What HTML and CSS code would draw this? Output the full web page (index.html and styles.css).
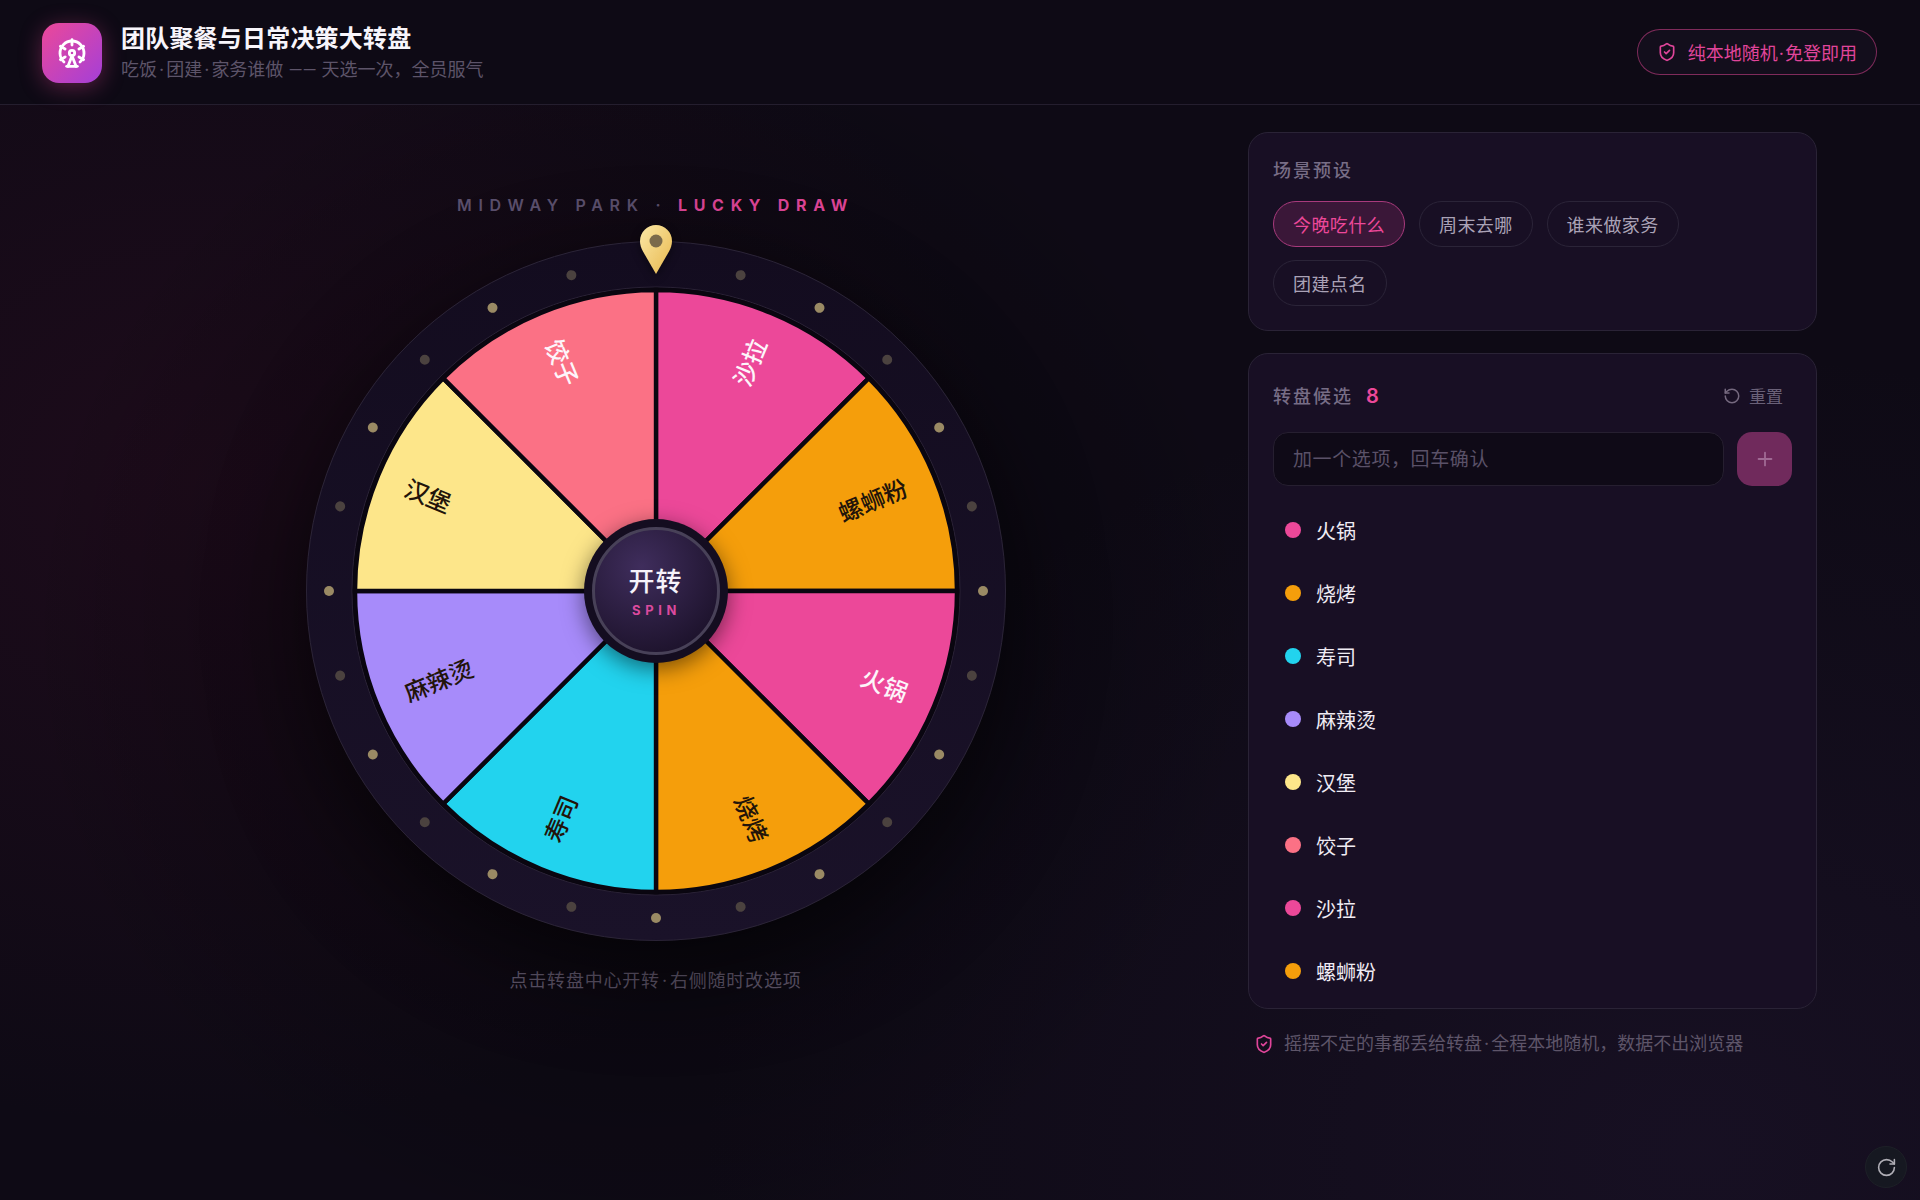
FILE: index.html
```html
<!DOCTYPE html>
<html lang="zh-CN">
<head>
<meta charset="utf-8">
<title>团队聚餐与日常决策大转盘</title>
<link rel="stylesheet" href="styles.css">
</head>
<body>
<header class="topbar">
  <div class="brand">
    <div class="logo">
      <svg class="logo-icon" viewBox="0 0 24 24"><circle cx="12" cy="12" r="2"/><path d="M12 2v4"/><path d="m6.8 15-3.5 2"/><path d="m20.7 7-3.5 2"/><path d="M6.8 9 3.3 7"/><path d="m20.7 17-3.5-2"/><path d="m9 22 3-8 3 8"/><path d="M8 22h8"/><path d="M18 18.7a9 9 0 1 0-12 0"/></svg>
    </div>
    <div class="brand-text">
      <h1 class="title">团队聚餐与日常决策大转盘</h1>
      <p class="subtitle">吃饭<span class="sep">·</span>团建<span class="sep">·</span>家务谁做 <span class="dash">——</span> 天选一次，全员服气</p>
    </div>
  </div>
  <div class="badge">
    <svg class="badge-icon" viewBox="0 0 24 24"><path d="M20 13c0 5-3.5 7.5-7.66 8.95a1 1 0 0 1-.67-.01C7.5 20.5 4 18 4 13V6a1 1 0 0 1 1-1c2 0 4.5-1.2 6.24-2.72a1.17 1.17 0 0 1 1.52 0C14.51 3.81 17 5 19 5a1 1 0 0 1 1 1z"/><path d="m9 12 2 2 4-4"/></svg>
    <span>纯本地随机<span class="sep">·</span>免登即用</span>
  </div>
</header>

<main class="layout">
  <section class="stage-col">
    <div class="caption"><span class="caption-dim">MIDWAY PARK ·</span> <span class="caption-hot">LUCKY DRAW</span></div>
    <div class="stage">
      <svg class="wheel" viewBox="0 0 700 700" width="700" height="700">
        <defs>
          <linearGradient id="rimFill" x1="0" y1="0" x2="0" y2="1">
            <stop offset="0" stop-color="#130c1f"/>
            <stop offset="1" stop-color="#1a1229"/>
          </linearGradient>
        </defs>
        <circle class="rim" cx="350" cy="350" r="349.5" fill="url(#rimFill)"/>
        <circle class="rim-inner" cx="350" cy="350" r="304"/>
        <g class="dots-dim">
          <circle cx="350" cy="23" r="5" transform="rotate(15 350 350)"/>
          <circle cx="350" cy="23" r="5" transform="rotate(45 350 350)"/>
          <circle cx="350" cy="23" r="5" transform="rotate(75 350 350)"/>
          <circle cx="350" cy="23" r="5" transform="rotate(105 350 350)"/>
          <circle cx="350" cy="23" r="5" transform="rotate(135 350 350)"/>
          <circle cx="350" cy="23" r="5" transform="rotate(165 350 350)"/>
          <circle cx="350" cy="23" r="5" transform="rotate(195 350 350)"/>
          <circle cx="350" cy="23" r="5" transform="rotate(225 350 350)"/>
          <circle cx="350" cy="23" r="5" transform="rotate(255 350 350)"/>
          <circle cx="350" cy="23" r="5" transform="rotate(285 350 350)"/>
          <circle cx="350" cy="23" r="5" transform="rotate(315 350 350)"/>
          <circle cx="350" cy="23" r="5" transform="rotate(345 350 350)"/>
        </g>
        <g class="dots-lit">
          <circle cx="350" cy="23" r="5" transform="rotate(30 350 350)"/>
          <circle cx="350" cy="23" r="5" transform="rotate(60 350 350)"/>
          <circle cx="350" cy="23" r="5" transform="rotate(90 350 350)"/>
          <circle cx="350" cy="23" r="5" transform="rotate(120 350 350)"/>
          <circle cx="350" cy="23" r="5" transform="rotate(150 350 350)"/>
          <circle cx="350" cy="23" r="5" transform="rotate(180 350 350)"/>
          <circle cx="350" cy="23" r="5" transform="rotate(210 350 350)"/>
          <circle cx="350" cy="23" r="5" transform="rotate(240 350 350)"/>
          <circle cx="350" cy="23" r="5" transform="rotate(270 350 350)"/>
          <circle cx="350" cy="23" r="5" transform="rotate(300 350 350)"/>
          <circle cx="350" cy="23" r="5" transform="rotate(330 350 350)"/>
        </g>
        <g class="wedges">
          <path class="c-pink" d="M350 350L350 49A301 301 0 0 1 562.84 137.16Z"/>
          <path class="c-amber" d="M350 350L562.84 137.16A301 301 0 0 1 651 350Z"/>
          <path class="c-pink" d="M350 350L651 350A301 301 0 0 1 562.84 562.84Z"/>
          <path class="c-amber" d="M350 350L562.84 562.84A301 301 0 0 1 350 651Z"/>
          <path class="c-cyan" d="M350 350L350 651A301 301 0 0 1 137.16 562.84Z"/>
          <path class="c-violet" d="M350 350L137.16 562.84A301 301 0 0 1 49 350Z"/>
          <path class="c-yellow" d="M350 350L49 350A301 301 0 0 1 137.16 137.16Z"/>
          <path class="c-coral" d="M350 350L137.16 137.16A301 301 0 0 1 350 49Z"/>
        </g>
        <g class="labels">
          <text class="lab-end t-light" x="621" y="350" transform="rotate(-67.5 350 350)">沙拉</text>
          <text class="lab-end t-dark" x="621" y="350" transform="rotate(-22.5 350 350)">螺蛳粉</text>
          <text class="lab-end t-light" x="621" y="350" transform="rotate(22.5 350 350)">火锅</text>
          <text class="lab-end t-dark" x="621" y="350" transform="rotate(67.5 350 350)">烧烤</text>
          <text class="lab-start t-dark" x="79" y="350" transform="rotate(-67.5 350 350)">寿司</text>
          <text class="lab-start t-dark" x="79" y="350" transform="rotate(-22.5 350 350)">麻辣烫</text>
          <text class="lab-start t-dark" x="79" y="350" transform="rotate(22.5 350 350)">汉堡</text>
          <text class="lab-start t-light" x="79" y="350" transform="rotate(67.5 350 350)">饺子</text>
        </g>
      </svg>
      <svg class="pin" viewBox="0 0 32 49" width="32" height="49">
        <defs>
          <linearGradient id="pinFill" x1="0" y1="0" x2="1" y2="1">
            <stop offset="0" stop-color="#fbe8a6"/>
            <stop offset="1" stop-color="#e8b84e"/>
          </linearGradient>
        </defs>
        <path d="M16 0C7.2 0 0 7.1 0 16C0 20 1.2 23 3 26.5L16 49L29 26.5C30.8 23 32 20 32 16C32 7.1 24.8 0 16 0Z" fill="url(#pinFill)"/>
        <circle cx="16" cy="16" r="6.5" fill="#7a6a4b"/>
      </svg>
      <button class="hub" type="button">
        <span class="hub-face">
          <span class="hub-main">开转</span>
          <span class="hub-sub">SPIN</span>
        </span>
      </button>
    </div>
    <p class="hint">点击转盘中心开转<span class="sep">·</span>右侧随时改选项</p>
  </section>

  <aside class="side-col">
    <section class="card presets">
      <div class="card-label">场景预设</div>
      <div class="chips">
        <button class="chip chip-on" type="button">今晚吃什么</button>
        <button class="chip" type="button">周末去哪</button>
        <button class="chip" type="button">谁来做家务</button>
        <button class="chip" type="button">团建点名</button>
      </div>
    </section>
    <section class="card options">
      <div class="options-head">
        <div class="options-title"><span class="card-label">转盘候选</span><span class="count">8</span></div>
        <button class="reset" type="button">
          <svg class="reset-icon" viewBox="0 0 24 24"><path d="M3 12a9 9 0 1 0 9-9 9.75 9.75 0 0 0-6.74 2.74L3 8"/><path d="M3 3v5h5"/></svg>
          <span class="reset-text">重置</span>
        </button>
      </div>
      <div class="add-row">
        <input class="add-input" type="text" placeholder="加一个选项，回车确认">
        <button class="add-btn" type="button" aria-label="添加">
          <svg class="add-icon" viewBox="0 0 24 24"><path d="M5 12h14"/><path d="M12 5v14"/></svg>
        </button>
      </div>
      <ul class="option-list">
        <li class="option"><i class="dot c-pink"></i>火锅</li>
        <li class="option"><i class="dot c-amber"></i>烧烤</li>
        <li class="option"><i class="dot c-cyan"></i>寿司</li>
        <li class="option"><i class="dot c-violet"></i>麻辣烫</li>
        <li class="option"><i class="dot c-yellow"></i>汉堡</li>
        <li class="option"><i class="dot c-coral"></i>饺子</li>
        <li class="option"><i class="dot c-pink"></i>沙拉</li>
        <li class="option"><i class="dot c-amber"></i>螺蛳粉</li>
      </ul>
    </section>
    <p class="footnote">
      <svg class="foot-icon" viewBox="0 0 24 24"><path d="M20 13c0 5-3.5 7.5-7.66 8.95a1 1 0 0 1-.67-.01C7.5 20.5 4 18 4 13V6a1 1 0 0 1 1-1c2 0 4.5-1.2 6.24-2.72a1.17 1.17 0 0 1 1.52 0C14.51 3.81 17 5 19 5a1 1 0 0 1 1 1z"/><path d="m9 12 2 2 4-4"/></svg>
      <span>摇摆不定的事都丢给转盘<span class="sep">·</span>全程本地随机，数据不出浏览器</span>
    </p>
  </aside>
</main>

<button class="refresh" type="button" aria-label="刷新">
  <svg class="refresh-icon" viewBox="0 0 24 24"><path d="M21 12a9 9 0 1 1-9-9c2.52 0 4.93 1 6.74 2.74L21 8"/><path d="M21 3v5h-5"/></svg>
</button>
</body>
</html>
```
FILE: styles.css
```css
* { box-sizing: border-box; }
html, body { margin: 0; height: 1200px; }
body {
  position: relative;
  overflow: hidden;
  color: #f3eff8;
  font-family: Inter, "Noto Sans CJK SC", sans-serif;
  background:
    radial-gradient(620px 620px at 640px 640px, rgba(0,0,0,.5), rgba(0,0,0,0) 100%),
    radial-gradient(800px 650px at 200px 480px, rgba(90,16,50,.2), rgba(90,16,50,0) 100%),
    radial-gradient(1000px 800px at 1700px 1150px, rgba(60,40,90,.2), rgba(60,40,90,0) 100%),
    #0e0a15;
}
.sep { margin: 0 2px; }
.dash { font-family: Roboto, sans-serif; }
.topbar {
  height: 105px;
  padding: 1px 43px 0 42px;
  display: flex;
  align-items: center;
  justify-content: space-between;
  border-bottom: 1px solid #241e2e;
  background: #0e0a15;
}
.brand { display: flex; align-items: center; gap: 19px; }
.logo {
  width: 60px; height: 60px;
  border-radius: 17px;
  display: flex; align-items: center; justify-content: center;
  background: linear-gradient(135deg, #ec4899, #a43fd8);
  box-shadow: 0 4px 22px rgba(236,72,153,.35);
}
.logo-icon { width: 32px; height: 32px; fill: none; stroke: #fff; stroke-width: 2.1; stroke-linecap: round; stroke-linejoin: round; }
.brand-text { padding-top: 1px; }
.title { margin: 0; font-size: 24px; line-height: 32px; font-weight: 600; letter-spacing: .2px; color: #f8f5fb; }
.subtitle { margin: 2px 0 0; font-size: 18px; line-height: 26px; color: #5d5469; }
.badge {
  height: 46px;
  margin-top: -1px;
  padding: 0 19px 0 19px;
  display: flex; align-items: center; gap: 10.5px;
  border: 1px solid rgba(236,72,153,.5);
  border-radius: 23px;
  background: #130e1c;
  color: #e0459a;
  font-size: 18px;
}
.badge .sep { margin: 0 1px; }
.badge-icon, .foot-icon { width: 20px; height: 20px; fill: none; stroke: #e0459a; stroke-width: 2; stroke-linecap: round; stroke-linejoin: round; flex: none; }

.layout {
  display: grid;
  grid-template-columns: 1fr 569px;
  gap: 40px;
  padding: 27px 103px 0;
}
.stage-col { padding-top: 62px; display: flex; flex-direction: column; align-items: center; }
.caption {
  height: 22px; line-height: 22px;
  font-size: 16px; font-weight: 600;
  letter-spacing: 6.7px;
  white-space: nowrap;
}
.caption-dim { color: #5a4f6c; }
.caption-hot { color: #da4494; font-weight: 700; }
.stage {
  position: relative;
  width: 700px; height: 700px;
  margin-top: 24.5px;
  border-radius: 50%;
  box-shadow: 0 30px 90px rgba(0,0,0,.55);
}
.wheel { display: block; }
.rim { stroke: #2b2437; stroke-width: 1; }
.rim-inner { fill: #0a0610; stroke: #2a2236; stroke-width: 1; }
.dots-dim { fill: #4b423f; }
.dots-lit { fill: #9a8a64; }
.wedges path { stroke: #0a0610; stroke-width: 4.4; stroke-linejoin: miter; }
.c-pink { fill: #ec4899; background: #ec4899; }
.c-amber { fill: #f59e0b; background: #f59e0b; }
.c-cyan { fill: #22d3ee; background: #22d3ee; }
.c-violet { fill: #a78bfa; background: #a78bfa; }
.c-yellow { fill: #fde68a; background: #fde68a; }
.c-coral { fill: #fb7185; background: #fb7185; }
.labels text { font-size: 24px; font-weight: 500; dominant-baseline: central; }
.lab-end { text-anchor: end; }
.lab-start { text-anchor: start; }
.t-light { fill: #fdf5fa; }
.t-dark { fill: #22140a; }
.pin {
  position: absolute;
  left: 334px; top: -15.5px;
  filter: drop-shadow(0 3px 5px rgba(0,0,0,.45));
}
.hub {
  position: absolute;
  left: 278px; top: 278px;
  width: 144px; height: 144px;
  padding: 8px;
  border: 0;
  border-radius: 50%;
  background: #140d20;
  box-shadow: 0 6px 22px rgba(0,0,0,.5);
  font-family: inherit;
}
.hub-face {
  width: 100%; height: 100%;
  padding-top: 2px;
  display: flex; flex-direction: column; align-items: center; justify-content: center;
  border-radius: 50%;
  border: 3px solid #484158;
  background: radial-gradient(circle at 38% 30%, #3f2d5c, #1b1129 85%);
}
.hub-main { font-size: 26px; line-height: 34px; font-weight: 500; color: #f6f2fa; letter-spacing: 1px; }
.hub-sub { font-size: 13px; line-height: 18px; font-weight: 700; color: #db4a9e; letter-spacing: 4.6px; margin-left: 2px; margin-top: 2px; }
.hint { margin: 27px 0 0; font-size: 18px; line-height: 26px; letter-spacing: .8px; color: #5e5569; }

.side-col { display: flex; flex-direction: column; }
.card {
  border: 1px solid #2a2336;
  border-radius: 20px;
  background: #180f24;
  padding: 24px 24px;
}
.card-label { font-size: 18px; line-height: 28px; font-weight: 500; letter-spacing: 2px; color: #776d86; }
.chips { margin-top: 16px; display: flex; flex-wrap: wrap; gap: 13px 14px; }
.chip {
  height: 46px;
  padding: 0 19px;
  border: 1px solid #2b2438;
  border-radius: 23px;
  background: transparent;
  color: #aaa2b6;
  font-family: inherit;
  font-size: 18px;
  letter-spacing: .4px;
}
.chip-on {
  border-color: #a83a7c;
  background: #3a1738;
  color: #ec4899;
}
.options { margin-top: 22px; padding-bottom: 5px; }
.options-head { height: 36px; display: flex; align-items: center; justify-content: space-between; padding-top: 1px; }
.options-title { display: flex; align-items: center; gap: 13px; }
.count { font-size: 20px; font-weight: 600; color: #ec4899; margin-top: -2px; }
.reset {
  display: flex; align-items: center; gap: 8px;
  padding: 4px 9px 4px 0;
  border: 0; background: transparent;
  color: #6a6178;
  font-family: inherit;
  font-size: 17px;
}
.reset-text { margin-top: -2px; }
.reset-icon { width: 18px; height: 18px; margin-top: -1px; fill: none; stroke: #75697f; stroke-width: 2; stroke-linecap: round; stroke-linejoin: round; }
.add-row { margin-top: 18px; display: flex; gap: 13px; }
.add-input {
  flex: 1; min-width: 0; height: 53.5px;
  padding: 2px 19px 0;
  border: 1px solid #261f30;
  border-radius: 15px;
  background: #0f0a17;
  color: #f3eff8;
  font-family: inherit;
  font-size: 19px;
  letter-spacing: .6px;
  outline: none;
}
.add-input::placeholder { color: #5a5168; opacity: 1; }
.add-btn {
  width: 55px; height: 53.5px; padding: 0;
  display: flex; align-items: center; justify-content: center;
  border: 0; border-radius: 15px;
  background: #702a5c;
}
.add-icon { width: 22px; height: 22px; fill: none; stroke: #a06a94; stroke-width: 2; stroke-linecap: round; }
.option-list { list-style: none; margin: 13px 0 0; padding: 0; }
.option {
  height: 63px;
  padding-left: 12px;
  display: flex; align-items: center; gap: 15px;
  font-size: 20px;
  color: #f0ecf4;
}
.dot { width: 16px; height: 16px; border-radius: 50%; flex: none; }
.footnote {
  margin: 22px 0 0 6px;
  display: flex; align-items: center; gap: 10px;
  font-size: 18px; line-height: 26px;
  color: #5e5569;
}
.refresh {
  position: absolute;
  right: 13px; bottom: 12px;
  width: 42px; height: 42px; padding: 0;
  display: flex; align-items: center; justify-content: center;
  border: 1px solid #1d2027;
  border-radius: 50%;
  background: #161821;
}
.refresh-icon { width: 21px; height: 21px; fill: none; stroke: #b0aeb6; stroke-width: 1.8; stroke-linecap: round; stroke-linejoin: round; }
```
